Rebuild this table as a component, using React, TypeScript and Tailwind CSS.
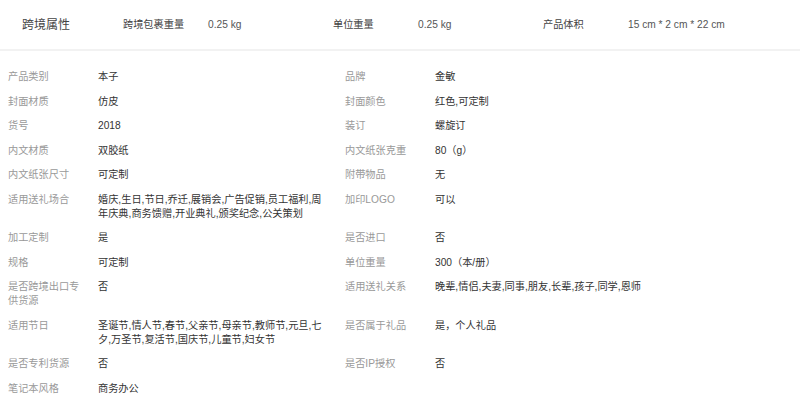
import * as React from 'react'

interface Attr { label: string, value: string }

const header: Attr[] = [
  { label: '跨境包裹重量', value: '0.25 kg' },
  { label: '单位重量', value: '0.25 kg' },
  { label: '产品体积', value: '15 cm * 2 cm * 22 cm' },
]

// pairs: left column, right column (null = empty cell)
const rows: [Attr, Attr | null][] = [
  [{ label: '产品类别', value: '本子' }, { label: '品牌', value: '金敏' }],
  [{ label: '封面材质', value: '仿皮' }, { label: '封面颜色', value: '红色,可定制' }],
  [{ label: '货号', value: '2018' }, { label: '装订', value: '螺旋订' }],
  [{ label: '内文材质', value: '双胶纸' }, { label: '内文纸张克重', value: '80（g）' }],
  [{ label: '内文纸张尺寸', value: '可定制' }, { label: '附带物品', value: '无' }],
  [{ label: '适用送礼场合', value: '婚庆,生日,节日,乔迁,展销会,广告促销,员工福利,周年庆典,商务馈赠,开业典礼,颁奖纪念,公关策划' }, { label: '加印LOGO', value: '可以' }],
  [{ label: '加工定制', value: '是' }, { label: '是否进口', value: '否' }],
  [{ label: '规格', value: '可定制' }, { label: '单位重量', value: '300（本/册）' }],
  [{ label: '是否跨境出口专供货源', value: '否' }, { label: '适用送礼关系', value: '晚辈,情侣,夫妻,同事,朋友,长辈,孩子,同学,恩师' }],
  [{ label: '适用节日', value: '圣诞节,情人节,春节,父亲节,母亲节,教师节,元旦,七夕,万圣节,复活节,国庆节,儿童节,妇女节' }, { label: '是否属于礼品', value: '是，个人礼品' }],
  [{ label: '是否专利货源', value: '否' }, { label: '是否IP授权', value: '否' }],
  [{ label: '笔记本风格', value: '商务办公' }, null],
]

function Cell({ attr }: { attr: Attr | null }) {
  if (!attr) return <div />
  return (
    <div className="flex items-start pl-[8px] py-[5.25px] leading-[14px]">
      <div className="w-[90px] shrink-0 pr-[12px] text-[#999]">{attr.label}</div>
      <div className="w-[226px] text-[#333]">{attr.value}</div>
    </div>
  )
}

export default function App() {
  return (
    <div className="w-[800px] h-[401px] bg-white overflow-hidden text-[10.2px]"
         style={{ fontFamily: '"Liberation Sans", "Noto Sans CJK SC", sans-serif' }}>
      <div className="h-[49px] pt-[1px] flex items-center pl-[22px]">
        <div className="w-[101px] text-[12px] text-[#444]">跨境属性</div>
        {header.map(h =>
          <div key={h.label} className="w-[210px] flex">
            <span className="w-[85px] text-[#444]">{h.label}</span>
            <span className="text-[#555]">{h.value}</span>
          </div>
        )}
      </div>
      <div className="h-[2px] bg-[#f2f2f2]" />
      <div className="pt-[14px] grid grid-cols-[337px_337px]">
        {rows.map((r, i) =>
          <React.Fragment key={i}>
            <Cell attr={r[0]} />
            <Cell attr={r[1]} />
          </React.Fragment>
        )}
      </div>
    </div>
  )
}
